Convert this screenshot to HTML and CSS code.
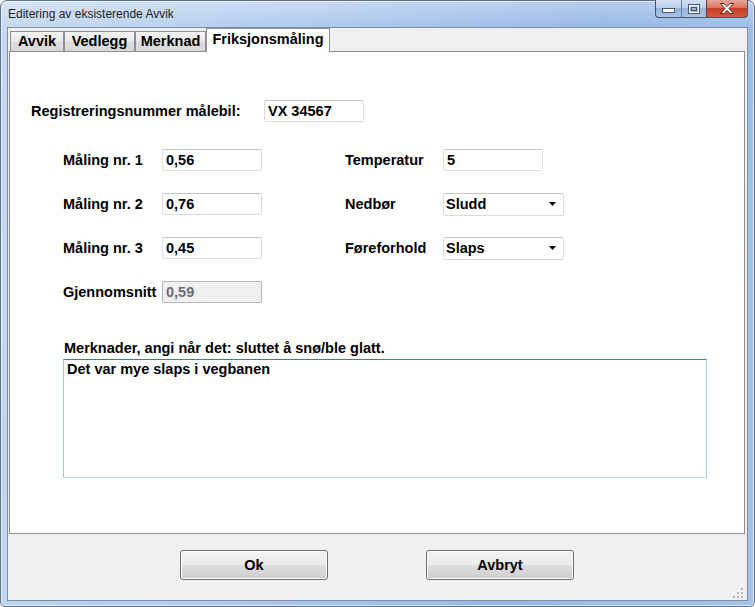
FILE: index.html
```html
<!DOCTYPE html>
<html lang="no">
<head>
<meta charset="utf-8">
<title>Editering av eksisterende Avvik</title>
<link rel="stylesheet" href="styles.css">
</head>
<body>
<div class="window">
  <div class="titlebar">
    <span class="title">Editering av eksisterende Avvik</span>
    <div class="caption-btns">
      <div class="cbtn cmin">
        <svg width="13" height="6" viewBox="0 0 13 6"><rect x="0.5" y="0.5" width="12" height="4" fill="#fff" stroke="#4a5a72"/></svg>
      </div>
      <div class="cbtn cmax">
        <svg width="12" height="10" viewBox="0 0 12 10"><rect x="0.5" y="0.5" width="11" height="9" fill="none" stroke="#4a5a72"/><rect x="1.5" y="1.5" width="9" height="7" fill="none" stroke="#fff"/><rect x="3.5" y="3.5" width="5" height="3" fill="none" stroke="#4a5a72"/></svg>
      </div>
      <div class="cbtn cclose">
        <svg width="14" height="11" viewBox="0 0 14 11"><path d="M0.5,0.5 L4,0.5 L7,3.6 L10,0.5 L13.5,0.5 L9,5.5 L13.5,10.5 L10,10.5 L7,7.4 L4,10.5 L0.5,10.5 L5,5.5 Z" fill="#fff" stroke="#5a2318" stroke-width="1"/></svg>
      </div>
    </div>
  </div>
  <div class="client">
    <div class="tabs">
      <div class="tab w-avvik">Avvik</div>
      <div class="tab w-vedlegg">Vedlegg</div>
      <div class="tab w-merknad">Merknad</div>
      <div class="tab active">Friksjonsmåling</div>
    </div>
    <div class="panel">
      <div class="row row-reg">
        <span class="lbl lbl-reg">Registreringsnummer målebil:</span>
        <div class="field">VX 34567</div>
      </div>
      <div class="row row-m">
        <span class="lbl lbl-l">Måling nr. 1</span>
        <div class="field">0,56</div>
        <span class="lbl lbl-r">Temperatur</span>
        <div class="field">5</div>
      </div>
      <div class="row row-m">
        <span class="lbl lbl-l">Måling nr. 2</span>
        <div class="field">0,76</div>
        <span class="lbl lbl-r">Nedbør</span>
        <div class="field select"><span>Sludd</span><svg class="arrow" width="7" height="4" viewBox="0 0 7 4"><path d="M0,0 L7,0 L3.5,4 Z" fill="#000"/></svg></div>
      </div>
      <div class="row row-m">
        <span class="lbl lbl-l">Måling nr. 3</span>
        <div class="field">0,45</div>
        <span class="lbl lbl-r">Føreforhold</span>
        <div class="field select"><span>Slaps</span><svg class="arrow" width="7" height="4" viewBox="0 0 7 4"><path d="M0,0 L7,0 L3.5,4 Z" fill="#000"/></svg></div>
      </div>
      <div class="row row-m">
        <span class="lbl lbl-l">Gjennomsnitt</span>
        <div class="field disabled">0,59</div>
      </div>
      <div class="notes-lbl">Merknader, angi når det: sluttet å snø/ble glatt.</div>
      <div class="notes">Det var mye slaps i vegbanen</div>
    </div>
    <div class="footer">
      <div class="btn">Ok</div>
      <div class="btn">Avbryt</div>
      <svg class="grip" width="10" height="10" viewBox="0 0 10 10">
        <rect x="8" y="0" width="2" height="2" fill="#b8b8b8"/>
        <rect x="4" y="4" width="2" height="2" fill="#b8b8b8"/>
        <rect x="8" y="4" width="2" height="2" fill="#b8b8b8"/>
        <rect x="0" y="8" width="2" height="2" fill="#b8b8b8"/>
        <rect x="4" y="8" width="2" height="2" fill="#b8b8b8"/>
        <rect x="8" y="8" width="2" height="2" fill="#b8b8b8"/>
      </svg>
    </div>
  </div>
</div>
</body>
</html>
```
FILE: styles.css
```css
html, body {
  margin: 0;
  padding: 0;
  width: 755px;
  height: 607px;
  overflow: hidden;
  background: #fff;
}

body {
  font-family: "Liberation Sans", Arial, sans-serif;
  color: #000;
}

.window {
  width: 755px;
  height: 607px;
  box-sizing: border-box;
  border: 1px solid #5f718a;
  border-radius: 7px 7px 5px 5px;
  padding: 0 6px 5px 6px;
  display: flex;
  flex-direction: column;
  background:
    linear-gradient(180deg, rgba(255,255,255,0.3) 0px, rgba(255,255,255,0) 26px),
    linear-gradient(100deg, #c6daf2 0%, #b1cbed 35%, #97b9e6 70%, #a2c2ea 100%);
  box-shadow: inset 0 0 0 1px rgba(255,255,255,0.6);
}

.titlebar {
  height: 26px;
  display: flex;
  align-items: flex-start;
  flex: none;
}

.title {
  font-family: "Liberation Sans", Arial, sans-serif;
  font-size: 12px;
  line-height: 15px;
  padding: 6px 0 0 1px;
  color: #1e1e1e;
}

.caption-btns {
  margin-left: auto;
  display: flex;
  margin-top: -1px;
  height: 18px;
}

.cbtn {
  height: 18px;
  display: flex;
  align-items: center;
  justify-content: center;
  border: 1px solid #46566e;
  border-top: none;
  box-sizing: border-box;
}

.cmin {
  width: 26px;
  border-radius: 0 0 0 4px;
  border-right: none;
  background: linear-gradient(180deg, #d4e1f2 0%, #bcd0ea 45%, #98b3d8 50%, #aac4e6 100%);
  padding-top: 5px;
}

.cmax {
  width: 25px;
  background: linear-gradient(180deg, #d4e1f2 0%, #bcd0ea 45%, #98b3d8 50%, #aac4e6 100%);
  border-left: 1px solid #6a7d98;
  border-right: none;
}

.cclose {
  width: 42px;
  border-radius: 0 0 4px 0;
  border-left: 1px solid #6a3a30;
  background: linear-gradient(180deg, #e8a899 0%, #d9765f 45%, #c43f25 50%, #d1583c 100%);
}

.client {
  flex: 1;
  display: flex;
  flex-direction: column;
  background: #f0f0f0;
  border: 1px solid #7d8ea6;
  padding: 0 2px 0 1px;
  position: relative;
}

.tabs {
  height: 23px;
  display: flex;
  align-items: flex-end;
  padding-left: 1px;
  flex: none;
}

.tab {
  height: 20px;
  box-sizing: border-box;
  border: 1px solid #8c8f98;
  border-bottom: none;
  background: linear-gradient(180deg, #f3f3f3 0%, #ebebeb 45%, #dddddd 55%, #d8d8d8 100%);
  font-size: 14.5px;
  font-weight: bold;
  line-height: 19px;
  text-align: center;
  white-space: nowrap;
}

.w-avvik { width: 54px; }
.w-vedlegg { width: 71px; }
.w-merknad { width: 71px; }

.tab.active {
  width: 124px;
  height: 24px;
  margin-bottom: -1px;
  background: #fff;
  line-height: 20px;
  position: relative;
  z-index: 1;
}

.panel {
  height: 483px;
  box-sizing: border-box;
  background: #fff;
  border: 1px solid #8c8f98;
  padding-top: 48px;
  flex: none;
}

.row {
  display: flex;
  align-items: center;
  height: 22px;
  font-size: 14.5px;
  font-weight: bold;
}

.row-reg {
  padding-left: 21px;
}

.row-m {
  padding-left: 53px;
  margin-top: 22px;
}

.row-reg + .row-m {
  margin-top: 27px;
}

.lbl {
  white-space: nowrap;
}

.lbl-reg { width: 233px; }
.lbl-l { width: 99px; }
.lbl-r { width: 98px; margin-left: 83px; }

.field {
  width: 100px;
  height: 22px;
  box-sizing: border-box;
  border: 1px solid #dadcdf;
  border-top-color: #c4c6ca;
  border-radius: 2px;
  padding-left: 3px;
  display: flex;
  align-items: center;
  background: #fff;
  white-space: nowrap;
}

.field.select {
  width: 121px;
  height: 23px;
  padding-left: 2px;
  padding-right: 7px;
}

.field.select .arrow {
  margin-left: auto;
}

.field.disabled {
  background: #f0f0f0;
  border-color: #b4b7bb;
  color: #6d6d6d;
}

.notes-lbl {
  margin: 37px 0 0 54px;
  font-size: 14.5px;
  font-weight: bold;
  line-height: 16px;
  white-space: nowrap;
}

.notes {
  margin: 3px 0 0 53px;
  width: 644px;
  height: 119px;
  box-sizing: border-box;
  border: 1px solid #a5cae3;
  border-top-color: #3c7db1;
  border-bottom-color: #b6dcec;
  padding: 0 3px;
  font-size: 14.5px;
  font-weight: bold;
  line-height: 18px;
}

.footer {
  flex: 1;
  display: flex;
  align-items: flex-start;
  padding: 16px 0 0 171px;
  gap: 98px;
  position: relative;
}

.btn {
  width: 148px;
  height: 30px;
  box-sizing: border-box;
  border: 1px solid #707070;
  border-radius: 3px;
  background: linear-gradient(180deg, #f2f2f2 0%, #ebebeb 48%, #dddddd 52%, #cfcfcf 100%);
  box-shadow: inset 0 0 0 1px #fbfbfb;
  display: flex;
  align-items: center;
  justify-content: center;
  font-size: 14.5px;
  font-weight: bold;
}

.grip {
  position: absolute;
  right: 2px;
  bottom: 2px;
}
```
